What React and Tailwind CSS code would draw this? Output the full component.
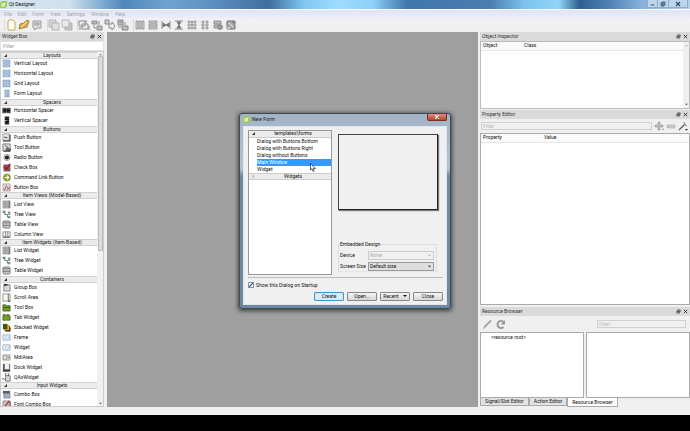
import React, { useState } from 'react';

const widgetGroups = [
  {
    title: 'Layouts',
    items: [
      ['Vertical Layout', 'vlayout'],
      ['Horizontal Layout', 'hlayout'],
      ['Grid Layout', 'grid'],
      ['Form Layout', 'form'],
    ],
  },
  {
    title: 'Spacers',
    items: [
      ['Horizontal Spacer', 'hspacer'],
      ['Vertical Spacer', 'vspacer'],
    ],
  },
  {
    title: 'Buttons',
    items: [
      ['Push Button', 'push'],
      ['Tool Button', 'tool'],
      ['Radio Button', 'radio'],
      ['Check Box', 'check'],
      ['Command Link Button', 'command'],
      ['Button Box', 'buttonbox'],
    ],
  },
  {
    title: 'Item Views (Model-Based)',
    items: [
      ['List View', 'list'],
      ['Tree View', 'tree'],
      ['Table View', 'table'],
      ['Column View', 'column'],
    ],
  },
  {
    title: 'Item Widgets (Item-Based)',
    items: [
      ['List Widget', 'list'],
      ['Tree Widget', 'tree'],
      ['Table Widget', 'table'],
    ],
  },
  {
    title: 'Containers',
    items: [
      ['Group Box', 'group'],
      ['Scroll Area', 'scroll'],
      ['Tool Box', 'toolbox'],
      ['Tab Widget', 'tabs'],
      ['Stacked Widget', 'stacked'],
      ['Frame', 'frame'],
      ['Widget', 'frame'],
      ['MdiArea', 'mdi'],
      ['Dock Widget', 'dock'],
      ['QAxWidget', 'qax'],
    ],
  },
  {
    title: 'Input Widgets',
    items: [
      ['Combo Box', 'combo'],
      ['Font Combo Box', 'fontcombo'],
    ],
  },
];

const templates = [
  'Dialog with Buttons Bottom',
  'Dialog with Buttons Right',
  'Dialog without Buttons',
  'Main Window',
  'Widget',
];

const widgetIcons = {
  vlayout: <path d="M1 1h8v2H1zM1 4h8v2H1zM1 7h8v2H1z" fill="#a9c3e2" stroke="#7596bd" strokeWidth=".5" />,
  hlayout: <path d="M1 1h2v8H1zM4 1h2v8H4zM7 1h2v8H7z" fill="#a9c3e2" stroke="#7596bd" strokeWidth=".5" />,
  grid: (
    <path
      d="M1 1h2v2H1zM4 1h2v2H4zM7 1h2v2H7zM1 4h2v2H1zM4 4h2v2H4zM7 4h2v2H7zM1 7h2v2H1zM4 7h2v2H4zM7 7h2v2H7z"
      fill="#9db7d8"
      stroke="#7590b5"
      strokeWidth=".5"
    />
  ),
  form: <path d="M3 1h1v2H3zM5 1h3v2H5zM3 4h1v2H3zM5 4h3v2H5zM3 7h1v2H3zM5 7h3v2H5z" fill="#9db7d8" stroke="#7590b5" strokeWidth=".5" />,
  hspacer: (
    <g>
      <path d="M1 2h8v6H1z" fill="#555" />
      <path d="M1 2v6M9 2v6M2 5l2-2v4zM8 5L6 3v4z" fill="#111" stroke="#111" strokeWidth=".8" />
      <path d="M4.500 3h1M4.500 7h1" stroke="#ddd" />
    </g>
  ),
  vspacer: (
    <g>
      <path d="M3 1h5v8H3z" fill="#444" />
      <path d="M3 1h5M3 9h5M5.500 2l2 2h-4zM5.500 8l2-2h-4z" fill="#111" stroke="#111" strokeWidth=".8" />
      <path d="M3 5h2" stroke="#ccc" />
    </g>
  ),
  push: (
    <g>
      <path d="M1 1h8v8H1z" fill="#999" />
      <path d="M1 1h7v7H1z" fill="#e4e4e4" stroke="#777" strokeWidth=".6" />
      <path d="M3 5h3M3 4v1" stroke="#444" />
      <path d="M1 9h8V2" fill="none" stroke="#333" />
    </g>
  ),
  tool: (
    <g>
      <path d="M1 1h8v8H1z" fill="#ddd" stroke="#555" strokeWidth=".8" />
      <path d="M3 2l1 2 2 1-2 1v2l4 1V6L6 4z" fill="#666" />
      <path d="M2 9h7V6" fill="none" stroke="#222" />
    </g>
  ),
  radio: (
    <g>
      <circle cx="5.500" cy="5" r="3.500" fill="#ddd" stroke="#777" strokeWidth=".6" />
      <circle cx="5.500" cy="5" r="2.300" fill="#222" />
    </g>
  ),
  check: (
    <g>
      <path d="M2 2h7v7H2z" fill="#8a5560" stroke="#555" strokeWidth=".6" />
      <path d="M2 4l3 3 4-6" fill="none" stroke="#b0142c" strokeWidth="1.800" />
    </g>
  ),
  command: (
    <g>
      <circle cx="5.500" cy="5" r="4" fill="#8ca634" stroke="#6f8426" strokeWidth=".6" />
      <path d="M3 5h4M5.500 3l2 2-2 2" fill="none" stroke="#fff" strokeWidth="1.200" />
    </g>
  ),
  buttonbox: (
    <g>
      <path d="M1 1h8v8H1z" fill="#e6dada" stroke="#888" strokeWidth=".6" />
      <path d="M2 6l1 2 2-6" fill="none" stroke="#566" strokeWidth=".8" />
      <path d="M5 4l4 4M9 4L5 8" stroke="#b73a3a" />
    </g>
  ),
  list: (
    <g>
      <path d="M1 1h8v8H1z" fill="#b5b5b5" stroke="#888" strokeWidth=".6" />
      <path d="M2 3h4M2 5h4M2 7h4" stroke="#878787" strokeWidth=".7" />
      <path d="M8 1v8" stroke="#666" />
    </g>
  ),
  tree: (
    <g>
      <path d="M1 2h3M3 2v3h3M6 5v3h2" fill="none" stroke="#567a67" />
      <path d="M1 1h2v2H1zM7 2h2v3H7zM7 7h2v2H7z" fill="#8eaa9a" stroke="#556" strokeWidth=".4" />
    </g>
  ),
  table: (
    <g>
      <rect x="1" y="1" width="8" height="8" rx="1.500" fill="#c7c7c7" stroke="#666" strokeWidth=".8" />
      <path d="M1 3h8M1 6h8" stroke="#666" strokeWidth=".8" />
      <path d="M4 3v6" stroke="#999" strokeWidth=".5" />
    </g>
  ),
  column: (
    <g>
      <path d="M1 2h8v6H1z" fill="#eee" stroke="#777" strokeWidth=".8" />
      <path d="M4 2v6M6.500 2v6" stroke="#777" strokeWidth=".8" />
      <path d="M1 8h8" stroke="#555" />
    </g>
  ),
  group: (
    <g>
      <path d="M2 2h7v7H2z" fill="#d7d9dc" stroke="#666" strokeWidth=".8" />
      <path d="M2 1h4v2H2z" fill="#333" />
    </g>
  ),
  scroll: (
    <g>
      <path d="M1 1h8v8H1z" fill="#f4f5ec" stroke="#777" strokeWidth=".8" />
      <path d="M7 1v8" stroke="#666" />
      <path d="M7 9h2" stroke="#222" />
    </g>
  ),
  toolbox: (
    <g>
      <path d="M1 2h3l1 1h4v6H1z" fill="#6d9d22" stroke="#3e5b14" strokeWidth=".8" />
      <path d="M1 5h8" stroke="#3e5b14" />
    </g>
  ),
  tabs: (
    <g>
      <path d="M1 3h8v5H1z" fill="#70a522" stroke="#3e5b14" strokeWidth=".8" />
      <path d="M1 2h3M5 2h3" stroke="#3e5b14" strokeWidth="1.400" />
    </g>
  ),
  stacked: (
    <g>
      <path d="M3 3h6v6H3z" fill="#a32c17" />
      <path d="M2 2h6v6H2z" fill="#e0b321" />
      <path d="M1 1h5v6H1z" fill="#38591d" />
      <path d="M4 9h5V5" fill="none" stroke="#222" />
    </g>
  ),
  frame: (
    <g>
      <path d="M1 2h8v6H1z" fill="#dbe7f4" stroke="#8ba9c9" strokeWidth=".8" />
      <path d="M2 7l2-4M5 7l2-4" stroke="#fff" />
      <path d="M3 7l2-4M6 7l2-4" stroke="#8ba9c9" strokeWidth=".6" />
    </g>
  ),
  mdi: (
    <g>
      <path d="M1 2h8v6H1z" fill="#d0d3cc" stroke="#888" strokeWidth=".6" />
      <path d="M2 3h3v4H2z" fill="#f8f8f8" stroke="#697b5c" strokeWidth=".6" />
      <path d="M6 4h3v2H6z" fill="#96a58a" />
    </g>
  ),
  dock: (
    <g>
      <path d="M1 1h8v8H1z" fill="#555" />
      <path d="M3 1h5v6H3z" fill="#f0f0f0" />
      <path d="M1 9h8" stroke="#111" />
    </g>
  ),
  qax: (
    <g>
      <path d="M4 3h5v6H4z" fill="#ddd" stroke="#555" strokeWidth=".8" />
      <path d="M4 0v3M7 0v3M0 7l2-1 2 2" fill="none" stroke="#444" strokeWidth=".9" />
    </g>
  ),
  combo: (
    <g>
      <path d="M1 1h8v3H1z" fill="#555f6b" />
      <path d="M2 4h7v5H2z" fill="#9fb0c3" stroke="#64748b" strokeWidth=".6" />
    </g>
  ),
  fontcombo: (
    <g>
      <path d="M1 1h8v8H1z" fill="#cbbcbc" stroke="#666" strokeWidth=".6" />
      <path d="M2 9l6-8" stroke="#a03434" strokeWidth="1.400" />
      <path d="M6 9h3V2" fill="none" stroke="#444" />
    </g>
  ),
};

const gray = '#8b8b8b';

const toolGroups = [
  [
    {
      label: 'New',
      art: <path d="M4 1h4l2 2v8H3V2z" fill="#fffdf0" stroke="#b9a24a" strokeWidth=".9" />,
    },
    {
      label: 'Open',
      art: (
        <g>
          <path d="M1 10l1-5 4-1 3-3 2 1-2 6z" fill="#d9a945" stroke="#9a7426" strokeWidth=".8" />
          <path d="M3 8l6-5" stroke="#fff1bb" />
        </g>
      ),
    },
    {
      label: 'Save',
      art: (
        <g fill="#ddd" stroke="#999">
          <path d="M2 2h8v7H6l-2 2-1-2H2z" />
          <path d="M4 4h4v2H4z" />
        </g>
      ),
    },
  ],
  [
    {
      label: 'Send to Back',
      art: (
        <g stroke="#aaa" strokeWidth=".8">
          <path d="M1 1h7v7H1z" fill="#d5d5d5" />
          <path d="M4 4h7v7H4z" fill="#dedede" />
        </g>
      ),
    },
    {
      label: 'Bring to Front',
      art: (
        <g stroke="#aaa" strokeWidth=".8">
          <path d="M4 4h7v7H4z" fill="#c5c5c5" />
          <path d="M1 1h7v7H1z" fill="#eaeaea" />
        </g>
      ),
    },
  ],
  [
    {
      label: 'Edit Widgets',
      art: (
        <g fill="none" stroke={gray}>
          <path d="M1 2h6v5H1zM4 5h6v5H4z" />
          <path d="M8 1v3M2 8v3M11 7v4" />
        </g>
      ),
    },
    {
      label: 'Edit Signals/Slots',
      art: (
        <g fill="none" stroke={gray}>
          <path d="M1 2h5v3H1zM6 7h5v4H6z" fill="#bbb" />
          <path d="M3 6v3h2M8 2v4" />
        </g>
      ),
    },
    {
      label: 'Edit Buddies',
      art: (
        <g fill="none" stroke={gray}>
          <path d="M1 1h4v4H1z" fill="#ccc" />
          <path d="M5 5h3V3l3 4-3 4V9H5z" />
        </g>
      ),
    },
    {
      label: 'Edit Tab Order',
      art: (
        <g fill="#bbb" stroke={gray}>
          <path d="M1 1h5v5H1zM5 7h6v4H5z" />
          <path d="M1 8h3M8 3v3M2 3h3" />
        </g>
      ),
    },
  ],
  [
    {
      label: 'Lay Out Horizontally',
      art: <path d="M2 2h2v8H2zM5 2h2v8H5zM8 2h2v8H8z" fill="#d5d5d5" stroke={gray} strokeWidth=".8" />,
    },
    {
      label: 'Lay Out Vertically',
      art: <path d="M2 2h8v2H2zM2 5h8v2H2zM2 8h8v2H2z" fill="#d5d5d5" stroke={gray} strokeWidth=".8" />,
    },
    {
      label: 'Horizontal Splitter',
      art: (
        <g stroke="#6f6f6f" fill="#777" strokeWidth=".8">
          <path d="M2 2v8M10 2v8" fill="none" />
          <path d="M3 4l3 2-3 2zM9 4L6 6l3 2z" />
        </g>
      ),
    },
    {
      label: 'Vertical Splitter',
      art: (
        <g stroke="#6f6f6f" fill="#777" strokeWidth=".8">
          <path d="M2 2h8M2 10h8" fill="none" />
          <path d="M4 3l2 3 2-3zM4 9l2-3 2 3z" />
        </g>
      ),
    },
    {
      label: 'Lay Out in a Grid',
      art: (
        <path
          d="M2 2h2v2H2zM5 2h2v2H5zM8 2h2v2H8zM2 5h2v2H2zM5 5h2v2H5zM8 5h2v2H8zM2 8h2v2H2zM5 8h2v2H5zM8 8h2v2H8z"
          fill="#ccc"
          stroke={gray}
          strokeWidth=".6"
        />
      ),
    },
    {
      label: 'Lay Out in a Form',
      art: <path d="M3 2h2v2H3zM7 2h2v2H7zM3 5h2v2H3zM7 5h2v2H7zM3 8h2v2H3zM7 8h2v2H7z" fill="#ccc" stroke={gray} strokeWidth=".7" />,
    },
    {
      label: 'Break Layout',
      art: (
        <g stroke={gray} strokeWidth=".9">
          <path d="M2 2h7v3H2zM2 6h5v3H2z" fill="#bbb" />
          <circle cx="8" cy="8" r="2.500" fill="#999" />
        </g>
      ),
    },
    {
      label: 'Adjust Size',
      art: (
        <g stroke="#777">
          <path d="M2 2h8v8H2z" fill="#aaa" />
          <path d="M4 4l4 4M2 9h3" stroke="#eee" />
          <path d="M7 3h2v2" fill="none" />
        </g>
      ),
    },
  ],
];

const QtLogo = () => (
  <svg className="size-[7px] shrink-0" viewBox="0 0 8 8">
    <path d="M2 0h6v6L6 8H0V2z" fill="#9ccc5c" />
    <path d="M2 3h2v3H2zM5 2v4M4 3h2" fill="none" stroke="#f2ffdf" strokeWidth=".9" />
  </svg>
);

const DockTitle = ({ children }) => (
  <div className="flex h-[9px] shrink-0 items-center justify-between bg-[#dadada] px-0.5">
    <h2 className="text-[#333]">{children}</h2>
    <div className="flex gap-0.5">
      <button aria-label="Float" className="size-[5px]">
        <svg viewBox="0 0 6 6" fill="none" stroke="#333" strokeWidth=".8">
          <path d="M2 1h3v2.500H2zM1 2.500h3V5H1z" />
        </svg>
      </button>
      <button aria-label="Close" className="size-[5px]">
        <svg viewBox="0 0 6 6" stroke="#222" strokeWidth="1">
          <path d="M1 1l4 4M5 1L1 5" />
        </svg>
      </button>
    </div>
  </div>
);

const Arrow = ({ up, className }) => (
  <svg className={className} viewBox="0 0 4 4">
    <path d={up ? 'M0 3l2-2 2 2z' : 'M0 1l2 2 2-2z'} fill="currentColor" />
  </svg>
);

// Small corner triangle of an expanded tree branch
const Expander = () => (
  <svg className="ml-[3px] size-[3px] shrink-0" viewBox="0 0 4 4">
    <path d="M4 0v4H0z" fill="#333" />
  </svg>
);

const WidgetBox = () => (
  <aside className="flex w-[107px] shrink-0 flex-col bg-[#f0f0f0] pr-[3px]">
    <DockTitle>Widget Box</DockTitle>
    <input
      aria-label="Filter widgets"
      placeholder="Filter"
      className="h-[10px] w-full shrink-0 border border-[#e3e3e3] bg-white px-0.5 outline-none placeholder:text-[#999]"
    />
    <div className="flex min-h-0 flex-1 overflow-hidden border border-[#ccc] bg-white">
      {/* Rows share the height under the headers, the last one runs on below the edge */}
      <div className="-mb-[3px] flex min-w-0 flex-1 flex-col">
        {widgetGroups.map((group) => (
          <section key={group.title} className="contents">
            <h3 className="flex h-[7px] shrink-0 items-center border-y border-[#d2d2d2] bg-[#ebebeb] text-[#222]">
              <Expander />
              <span className="flex-1 text-center">{group.title}</span>
            </h3>
            <ul className="contents">
              {group.items.map(([name, icon]) => (
                <li key={name} className="flex min-h-0 max-h-[10px] flex-1 items-center gap-[3px] pl-px whitespace-nowrap">
                  <svg className="size-[9px] shrink-0" viewBox="0 0 10 10">
                    {widgetIcons[icon]}
                  </svg>
                  {name}
                </li>
              ))}
            </ul>
          </section>
        ))}
      </div>
      <div className="flex w-[6px] flex-col items-center justify-between bg-[#f0f0f0] py-px">
        <Arrow up className="size-[3px] text-[#777]" />
        <div className="mb-auto h-[195px] w-[5px] rounded-[1px] border border-[#bbb] bg-[#dcdcdc]" />
        <Arrow className="size-[3px] text-[#555]" />
      </div>
    </div>
  </aside>
);

const HeaderTable = ({ columns, first }) => (
  <table className="w-full table-fixed border-collapse text-left">
    <thead>
      <tr className="h-[8px] border-b border-[#e6e6e6] bg-[#fafafa]">
        {columns.map((col, i) => (
          <th key={col} className={`p-0 pl-0.5 font-normal ${i === 0 ? first : ''}`}>
            {col}
          </th>
        ))}
      </tr>
    </thead>
  </table>
);

const RightDocks = () => {
  const [tab, setTab] = useState('Resource Browser');

  return (
    <aside className="flex w-[212px] shrink-0 flex-col bg-[#f0f0f0] pl-0.5">
      <section className="flex h-[77px] shrink-0 flex-col">
        <DockTitle>Object Inspector</DockTitle>
        <div className="flex flex-1 border border-[#bbb] bg-white">
          <div className="flex-1">
            <HeaderTable columns={['Object', 'Class']} first="w-[41px]" />
          </div>
          <div className="flex w-[6px] flex-col items-center justify-between bg-[#f0f0f0] py-0.5">
            <Arrow up className="size-[3px] text-[#aaa]" />
            <Arrow className="size-[3px] text-[#555]" />
          </div>
        </div>
      </section>

      <section className="mt-px flex min-h-0 flex-1 flex-col">
        <DockTitle>Property Editor</DockTitle>
        <div className="flex h-[14px] shrink-0 items-center gap-0.5 pr-0.5 pl-px">
          <input
            aria-label="Filter properties"
            placeholder="Filter"
            disabled
            className="h-[8px] min-w-0 flex-1 border border-[#d0d0d0] bg-[#f0f0f0] px-px placeholder:text-[#bbb]"
          />
          <button aria-label="Add property" className="size-[10px]">
            <svg viewBox="0 0 10 10" fill="#bbb" stroke="#999" strokeWidth=".6">
              <path d="M4 1h2v3h3v2H6v3H4V6H1V4h3z" />
              <path d="M8 8h2L9 9z" />
            </svg>
          </button>
          <button aria-label="Remove property" className="size-[10px]">
            <svg viewBox="0 0 10 10" fill="#ccc" stroke="#aaa" strokeWidth=".6">
              <path d="M1 4h8v3H1z" />
            </svg>
          </button>
          <button aria-label="Configure" className="size-[10px]">
            <svg viewBox="0 0 10 10">
              <path d="M1 9l6-6" stroke="#666" strokeWidth="1.400" />
              <path d="M6 1l1 3 2 1" fill="none" stroke="#888" />
              <path d="M7 8h3L8.500 9.500z" fill="#111" />
            </svg>
          </button>
        </div>
        <div className="min-h-0 flex-1 border border-[#aaa] bg-white">
          <HeaderTable columns={['Property', 'Value']} first="w-[61px]" />
        </div>
      </section>

      <section className="mt-0.5 flex h-[100px] shrink-0 flex-col">
        <DockTitle>Resource Browser</DockTitle>
        <div className="flex h-[16px] shrink-0 items-center pr-1 pl-0.5">
          <button aria-label="Edit resources" className="size-[11px]">
            <svg viewBox="0 0 11 11">
              <path d="M1 10l1-3 6-6 2 1-7 7z" fill="#aaa" />
            </svg>
          </button>
          <button aria-label="Reload" className="ml-0.5 size-[11px]">
            <svg viewBox="0 0 11 11">
              <path d="M8.500 8a3.500 3.500 0 1 1 0-5" fill="none" stroke="#999" strokeWidth="2" />
              <path d="M10 1v4.500H5.500z" fill="#999" />
            </svg>
          </button>
          <input
            aria-label="Filter resources"
            placeholder="Filter"
            disabled
            className="ml-auto h-[8px] w-[89px] border border-[#d0d0d0] bg-[#f0f0f0] px-px placeholder:text-[#bbb]"
          />
        </div>
        <div className="grid min-h-0 flex-1 grid-cols-2 gap-0.5">
          <ul className="border border-[#aaa] bg-white pt-px pl-2.5">
            <li>&lt;resource root&gt;</li>
          </ul>
          <div className="border border-[#aaa] bg-white" />
        </div>
        <div role="tablist" className="flex h-[9px] shrink-0 items-start">
          {['Signal/Slot Editor', 'Action Editor', 'Resource Browser'].map((name) => (
            <button
              key={name}
              role="tab"
              aria-selected={tab === name}
              onClick={() => setTab(name)}
              className={`flex items-center border border-t-0 border-[#aaa] px-1 whitespace-nowrap ${
                tab === name ? 'h-[9px] bg-white' : 'h-[8px] bg-[#e2e2e2]'
              }`}
            >
              {name}
            </button>
          ))}
        </div>
      </section>
    </aside>
  );
};

const DialogSelect = ({ id, label, value, disabled }) => (
  <div className="flex items-center">
    <label htmlFor={id} className="w-[28px] whitespace-nowrap">
      {label}
    </label>
    <div className="relative flex-1">
      <select
        id={id}
        disabled={disabled}
        className={`block h-[9px] w-full appearance-none border px-px leading-[6px] ${
          disabled ? 'border-[#ccc] bg-[#f0f0f0] text-[#aaa]' : 'border-[#999] bg-[#dedede] text-[#111]'
        }`}
      >
        <option>{value}</option>
      </select>
      <Arrow className={`pointer-events-none absolute top-[3px] right-[3px] size-[3px] ${disabled ? 'text-[#aaa]' : 'text-[#222]'}`} />
    </div>
  </div>
);

const NewFormDialog = () => {
  const [selected, setSelected] = useState('Main Window');
  const [showOnStartup, setShowOnStartup] = useState(true);

  return (
    <div
      role="dialog"
      aria-label="New Form"
      className="w-[212px] rounded-[3px] border border-[#3d4a57] bg-linear-to-b from-[#a3b3c6] via-[#b4c2d0] via-28% to-[#6f87a0] to-32% px-[3px] pb-[3px] shadow-[0_1px_4px_1px_rgba(0,0,0,0.6)]"
    >
      <div className="flex h-[12px] items-center gap-0.5">
        <QtLogo />
        <span className="flex-1 text-[#222]">New Form</span>
        <button
          aria-label="Close dialog"
          className="flex h-[7px] w-[20px] items-center justify-center self-start rounded-b-[2px] border border-t-0 border-[#7c2d20] bg-linear-to-b from-[#dd8f80] to-[#c03a22]"
        >
          <svg className="size-[4px]" viewBox="0 0 4 4" stroke="#fff" strokeWidth="1.200">
            <path d="M0 0l4 4M4 0L0 4" />
          </svg>
        </button>
      </div>

      <div className="border border-[#dfe7ee] bg-[#f0f0f0] pt-[3px] pr-[3px] pb-[3px] pl-1">
        <div className="flex h-[148px] gap-[6px] border-b border-[#bbb] pb-0.5">
          <div className="w-[84px] border border-[#999] bg-white">
            <h3 className="flex h-[7px] items-center border-b border-[#ccc] bg-[#ebebeb]">
              <Expander />
              <span className="flex-1 text-center">templates\forms</span>
            </h3>
            <ul className="pl-2">
              {templates.map((name) => (
                <li key={name} className="relative">
                  <button
                    onClick={() => setSelected(name)}
                    className={`block h-[7px] w-full text-left whitespace-nowrap ${
                      selected === name ? 'bg-[#3399ff] text-white' : 'text-[#111]'
                    }`}
                  >
                    {name}
                  </button>
                  {selected === name && (
                    <svg className="pointer-events-none absolute top-1 left-[53px] z-10 h-[9px] w-[6px]" viewBox="0 0 6 9">
                      <path d="M.5.5v6.500l1.500-1.300L3.200 8.500l1-.5-1-2.500h2.200z" fill="#fff" stroke="#222" strokeWidth=".7" />
                    </svg>
                  )}
                </li>
              ))}
            </ul>
            <h3 className="flex h-[7px] items-center border-y border-[#ccc] bg-[#ebebeb]">
              <svg className="ml-[3px] size-[3px] shrink-0" viewBox="0 0 4 4">
                <path d="M1 0l2 2-2 2z" fill="none" stroke="#999" strokeWidth=".7" />
              </svg>
              <span className="flex-1 text-center">Widgets</span>
            </h3>
          </div>

          <div className="flex flex-1 flex-col pt-1 pr-[5px]">
            <div className="h-[76px] border border-[#444] border-r-[#222] border-b-[#222] bg-[#f0f0f0] shadow-[1px_1px_1px_rgba(0,0,0,0.5)]" />
            <fieldset className="mt-auto mr-px mb-[3px] border border-[#ddd] border-b-[#e5e5e5] pr-0.5 pl-px">
              <legend>Embedded Design</legend>
              <div className="flex flex-col gap-0.5 pt-[3px]">
                <DialogSelect id="device" label="Device" value="None" disabled />
                <DialogSelect id="screen-size" label="Screen Size" value="Default size" />
              </div>
            </fieldset>
          </div>
        </div>

        <label className="mt-1 flex items-center gap-0.5">
          <input
            type="checkbox"
            checked={showOnStartup}
            onChange={(e) => setShowOnStartup(e.target.checked)}
            className="m-0 size-[6px] appearance-none border border-[#8a93a5] bg-white checked:bg-[linear-gradient(135deg,#fff_30%,#3a5a92_50%,#fff_70%)]"
          />
          Show this Dialog on Startup
        </label>

        <div className="mt-[3px] flex justify-end gap-[3px]">
          <button className="h-[9px] w-[30px] rounded-[1px] border border-[#3c9cc9] bg-[#dcebf3] shadow-[inset_0_0_1px_#5cc6ee]">Create</button>
          <button className="h-[9px] w-[30px] rounded-[1px] border border-[#888] bg-linear-to-b from-[#f4f4f4] to-[#d8d8d8]">Open...</button>
          <button className="flex h-[9px] w-[30px] items-center justify-center gap-1 rounded-[1px] border border-[#888] bg-linear-to-b from-[#f4f4f4] to-[#d8d8d8]">
            Recent
            <Arrow className="size-1 text-[#111]" />
          </button>
          <button className="h-[9px] w-[30px] rounded-[1px] border border-[#888] bg-linear-to-b from-[#f4f4f4] to-[#d8d8d8]">Close</button>
        </div>
      </div>
    </div>
  );
};

const App = () => (
  <div className="relative flex h-screen flex-col bg-black font-[Roboto,sans-serif] text-[5px] leading-[7px] text-[#111]">
    <header className="shrink-0">
      <div className="flex h-[9px] items-center gap-0.5 bg-[linear-gradient(90deg,#d3e4f0_0%,#cfe0ee_10%,#7aa9d0_15%,#4f86ba_18%,#6fa3cf_24%,#5f93c4_30%,#3f6f9f_39%,#7fc6f2_44%,#9ddcff_49%,#8fd0f8_54%,#4076ab_59%,#4a7db0_71%,#7cc4ee_76%,#8fd4f8_81%,#2f5f90_84%,#4b7fb3_88%,#86b2dc_93%,#b4cfe8_100%)] pr-0.5">
        <QtLogo />
        <h1 className="flex-1 text-[#111]">Qt Designer</h1>
        <div className="flex h-[8px] self-start text-[#33475c]">
          <button aria-label="Minimize" className="w-[11px] border border-t-0 border-[#8fabc8] bg-[#bdd5ec]">
            <svg className="h-[6px] w-full" viewBox="0 0 10 6">
              <path d="M3 4h4" stroke="currentColor" />
            </svg>
          </button>
          <button aria-label="Restore" className="w-[11px] border border-t-0 border-l-0 border-[#8fabc8] bg-[#bdd5ec]">
            <svg className="h-[6px] w-full" viewBox="0 0 10 6" fill="none" stroke="currentColor" strokeWidth=".8">
              <path d="M4 1h3v3H4zM3 2h3v3H3z" />
            </svg>
          </button>
          <button aria-label="Close" className="w-[19px] border border-t-0 border-l-0 border-[#8fabc8] bg-[#bdd5ec]">
            <svg className="h-[6px] w-full" viewBox="0 0 10 6" stroke="currentColor" strokeWidth="1.200">
              <path d="M3 1l4 4M7 1L3 5" />
            </svg>
          </button>
        </div>
      </div>
      <nav className="flex h-[9px] items-center gap-[6px] border-t border-white bg-linear-to-b from-[#dfe4f3] to-[#eceef4] pl-1 text-[#a3a5ab]">
        {['File', 'Edit', 'Form', 'View', 'Settings', 'Window', 'Help'].map((name) => (
          <button key={name}>{name}</button>
        ))}
      </nav>
      <div role="toolbar" className="flex h-[14px] items-center gap-1 bg-[#f0f0f0] pl-1">
        {toolGroups.map((group, i) => (
          <div key={i} className="flex gap-px border-l border-[#d8d8d8]">
            {group.map((tool) => (
              <button key={tool.label} aria-label={tool.label} className="size-[12px]">
                <svg viewBox="0 0 12 12">{tool.art}</svg>
              </button>
            ))}
          </div>
        ))}
      </div>
    </header>

    <main className="flex min-h-0 flex-1 bg-[#9f9f9f]">
      <WidgetBox />
      <div className="flex-1" />
      <RightDocks />
    </main>

    <footer className="h-[24px] shrink-0 border-t-8 border-[#f0f0f0] bg-black" />

    <div className="absolute inset-0 flex items-center justify-center pb-[10px]">
      <NewFormDialog />
    </div>
  </div>
);

export default App;
